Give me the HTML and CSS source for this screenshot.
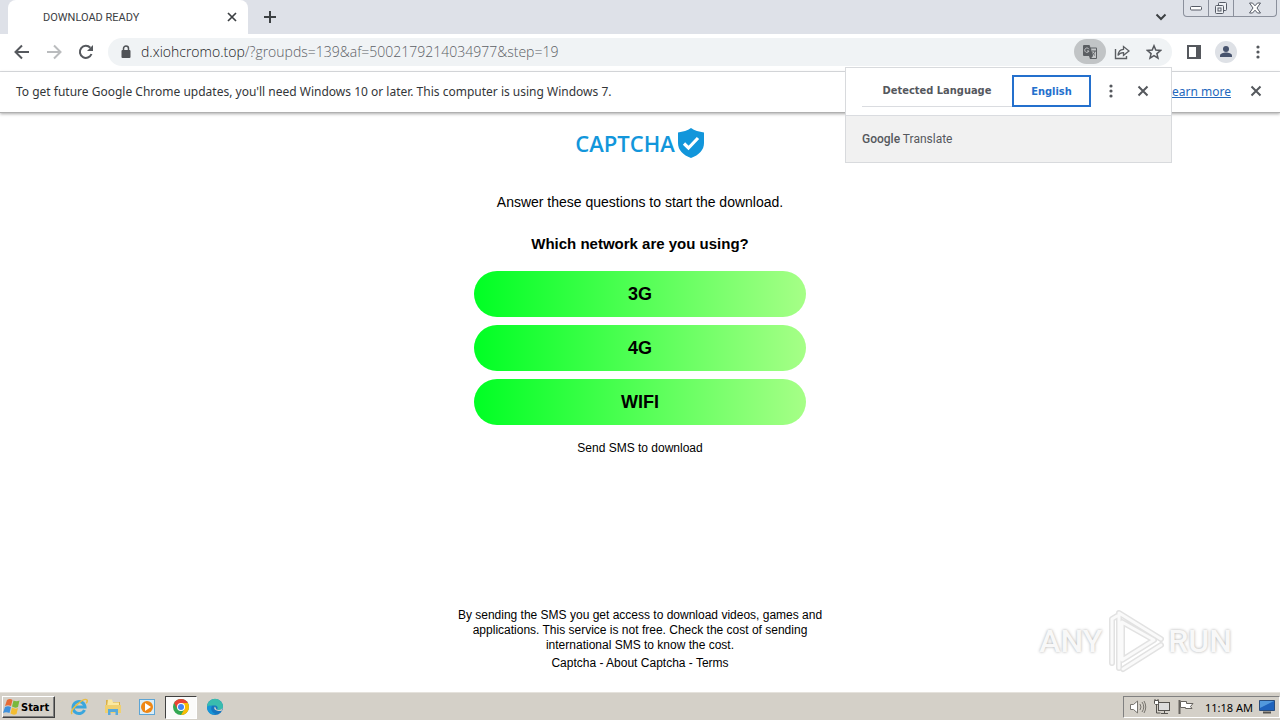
FILE: index.html
```html
<!DOCTYPE html>
<html lang="en">
<head>
<meta charset="utf-8">
<title>DOWNLOAD READY</title>
<link rel="stylesheet" href="styles.css">
</head>
<body>
<div class="desktop">
  <header class="tabstrip">
    <div class="tab"><span class="tab-title">DOWNLOAD READY</span>
      <button class="icon-btn" aria-label="Close tab"><svg width="10" height="10" viewBox="0 0 10 10"><path d="M1 1l8 8M9 1l-8 8" stroke="#3c4043" stroke-width="1.7"/></svg></button>
    </div>
    <button class="icon-btn new-tab" aria-label="New tab"><svg width="14" height="14" viewBox="0 0 14 14"><path d="M7 1v12M1 7h12" stroke="#3c4043" stroke-width="2"/></svg></button>
    <button class="icon-btn tab-search" aria-label="Search tabs"><svg width="12" height="8" viewBox="0 0 12 8"><path d="M1.500 1.500L6 6l4.500-4.500" fill="none" stroke="#3c4043" stroke-width="2"/></svg></button>
    <div class="win-controls">
      <button class="win-btn" aria-label="Minimize"><svg width="12" height="6" viewBox="0 0 12 6"><rect x=".5" y="1.500" width="11" height="3.500" rx="1" fill="#fff" stroke="#565b66"/></svg></button>
      <button class="win-btn" aria-label="Restore"><svg width="14" height="14" viewBox="0 0 14 14"><g fill="#eef0f4" stroke="#565b66"><rect x="4.500" y="1.500" width="8" height="8" rx="1"/><rect x="1.500" y="4.500" width="8" height="8" rx="1"/><rect x="4" y="7" width="3" height="3"/></g></svg></button>
      <button class="win-btn win-close" aria-label="Close"><svg width="14" height="12" viewBox="0 0 14 12"><path d="M1.500 1h3L7 3.800 9.500 1h3L9 6l3.500 5h-3L7 8.200 4.500 11h-3L5 6z" fill="#fff" stroke="#565b66"/></svg></button>
    </div>
  </header>

  <nav class="toolbar">
    <button class="icon-btn nav-btn" aria-label="Back"><svg width="16" height="16" viewBox="0 0 16 16"><path d="M15 8H2M8 1.500L1.500 8 8 14.500" fill="none" stroke="#55585d" stroke-width="2"/></svg></button>
    <button class="icon-btn nav-btn" aria-label="Forward"><svg width="16" height="16" viewBox="0 0 16 16"><path d="M1 8h13M8 1.500L14.500 8 8 14.500" fill="none" stroke="#babcbe" stroke-width="2"/></svg></button>
    <button class="icon-btn nav-btn" aria-label="Reload"><svg width="16" height="16" viewBox="0 0 16 16"><path d="M13.500 10A6 6 0 1 1 12.300 3.800" fill="none" stroke="#55585d" stroke-width="2"/><path d="M15 1v6H9z" fill="#55585d"/></svg></button>
    <div class="omnibox">
      <svg class="lock" width="10" height="14" viewBox="0 0 10 14"><path d="M2.500 6V3.500a2.500 2.500 0 0 1 5 0V6" fill="none" stroke="#505357" stroke-width="1.500"/><rect x=".5" y="5" width="9" height="8" rx="1" fill="#505357"/></svg>
      <span class="url"><b>d.xiohcromo.top</b>/?groupds=139&amp;af=5002179214034977&amp;step=19</span>
      <button class="icon-btn translate-btn" aria-label="Translate this page"><svg width="16" height="16" viewBox="0 0 16 16"><path d="M2 1h5.500l1 2.500H14a1 1 0 0 1 1 1V14a1 1 0 0 1-1 1H8l-1-3H2a1 1 0 0 1-1-1V2a1 1 0 0 1 1-1z" fill="#5b5e62"/><path d="M9 4.500h5v9.500H9.300L11 12z" fill="#c4c6c8"/><path d="M6.900 5.200A2.200 2.200 0 1 0 7 7H5" fill="none" stroke="#c4c6c8"/><path d="M10 7h4M13 7c-.5 2-1.500 3-2.800 4M10.500 8.500c.8 1.500 1.600 2.300 2.500 2.800" fill="none" stroke="#5b5e62"/></svg></button>
      <button class="icon-btn omni-btn" aria-label="Share"><svg width="16" height="16" viewBox="0 0 16 16"><path d="M1.500 5v9.500h11V12" fill="none" stroke="#5b5e62" stroke-width="1.400"/><path d="M4 11.500c.3-4 2-6 5.500-6.200V2.500L15 7l-5.500 4.300V8.600C7 8.500 5.300 9.500 4 11.500z" fill="none" stroke="#5b5e62" stroke-width="1.300"/></svg></button>
      <button class="icon-btn omni-btn" aria-label="Bookmark"><svg width="16" height="16" viewBox="0 0 16 16"><path d="M8 1.800l1.800 4.300 4.700.4-3.600 3.100 1.100 4.600L8 11.700l-4 2.500 1.100-4.600L1.500 6.500l4.700-.4z" fill="none" stroke="#55585d" stroke-width="1.500"/></svg></button>
    </div>
    <button class="icon-btn side-btn" aria-label="Side panel"><svg width="14" height="14" viewBox="0 0 14 14"><rect x="1" y="1" width="12" height="12" fill="#fff" stroke="#55585d" stroke-width="2"/><path d="M9 1h4v12H9z" fill="#55585d"/></svg></button>
    <button class="icon-btn side-btn" aria-label="Profile"><svg width="22" height="22" viewBox="0 0 22 22"><circle cx="11" cy="11" r="11" fill="#dee1e6"/><circle cx="11" cy="8" r="3" fill="#47536d"/><path d="M5 16v-1.500c0-2 3.500-3 6-3s6 1 6 3V16z" fill="#47536d"/></svg></button>
    <button class="icon-btn side-btn" aria-label="Menu"><svg width="4" height="14" viewBox="0 0 4 14" fill="#55585d"><circle cx="2" cy="2" r="1.600"/><circle cx="2" cy="7" r="1.600"/><circle cx="2" cy="12" r="1.600"/></svg></button>
  </nav>

  <div class="infobar">
    <span>To get future Google Chrome updates, you'll need Windows 10 or later. This computer is using Windows 7.</span>
    <a class="learn" href="#">Learn more</a>
    <button class="icon-btn" aria-label="Dismiss"><svg width="12" height="12" viewBox="0 0 12 12"><path d="M1.500 1.500l9 9M10.500 1.500l-9 9" stroke="#55585d" stroke-width="2"/></svg></button>
  </div>

  <section class="translate-popup" aria-label="Translate">
    <div class="popup-top">
      <div class="popup-tabs"><button class="lang">Detected Language</button><button class="lang lang-active">English</button></div>
      <button class="icon-btn" aria-label="Options"><svg width="4" height="14" viewBox="0 0 4 14" fill="#55585d"><circle cx="2" cy="2" r="1.600"/><circle cx="2" cy="7" r="1.600"/><circle cx="2" cy="12" r="1.600"/></svg></button>
      <button class="icon-btn popup-close" aria-label="Close"><svg width="12" height="12" viewBox="0 0 12 12"><path d="M1.500 1.500l9 9M10.500 1.500l-9 9" stroke="#55585d" stroke-width="2"/></svg></button>
    </div>
    <div class="popup-brand"><span class="google">Google</span> Translate</div>
  </section>

  <main class="page">
    <div class="brand">CAPTCHA<svg width="28" height="32" viewBox="0 0 28 32"><path d="M14 1c3.500 2.500 8 3.800 13 4.500V16c0 7-5 12-13 15C6 28 1 23 1 16V5.500C6 4.800 10.500 3.500 14 1z" fill="#1296db"/><path d="M7 16.500l4.500 4.500L21 11" fill="none" stroke="#fff" stroke-width="3.200"/></svg></div>
    <p class="intro">Answer these questions to start the download.</p>
    <h1 class="question">Which network are you using?</h1>
    <div class="options">
      <button class="option">3G</button>
      <button class="option">4G</button>
      <button class="option">WIFI</button>
    </div>
    <p class="send">Send SMS to download</p>
    <footer class="legal">
      <p>By sending the SMS you get access to download videos, games and applications. This service is not free. Check the cost of sending international SMS to know the cost.</p>
      <p class="links"><a href="#">Captcha</a> - <a href="#">About Captcha</a> - <a href="#">Terms</a></p>
    </footer>
    <div class="watermark"><span>ANY</span><svg width="60" height="66" viewBox="0 0 60 66"><g fill="none" stroke-linejoin="round" stroke-linecap="round"><path d="M7 55V11l5-3M14 60V5l42 26M18 61l38-24M17 14v38l32-20z" stroke="#e2e2e2" stroke-width="6"/><path d="M7 55V11l5-3M14 60V5l42 26M18 61l38-24M17 14v38l32-20z" stroke="#fafafa" stroke-width="3"/></g></svg><span>RUN</span></div>
  </main>

  <footer class="taskbar">
    <button class="start"><svg width="18" height="18" viewBox="0 0 18 18"><path d="M4 2q3-2 5.500 0L8 8Q5 6.500 2 8z" fill="#e66b35"/><path d="M10.500 2.500q3 1.500 6 0L15 9q-3 1.500-6-.5z" fill="#79b83c"/><path d="M2 9q3-1.500 6 0l-1.500 6Q3 13.500 0 15z" fill="#3f91dc"/><path d="M9 9.500q3 2 6 .5l-1.500 6q-3 1.500-6-.5z" fill="#f3bd31"/></svg>Start</button>
    <button class="task" aria-label="Internet Explorer"><svg width="18" height="18" viewBox="0 0 18 18"><path d="M14.500 12A6 6 0 1 1 15 9H4" fill="none" stroke="#3aa6dd" stroke-width="3"/><path d="M2 16C-1 12 14-1 17 2c.7 1-.2 2.500-.8 3.300" fill="none" stroke="#e8bd43" stroke-width="1.500"/></svg></button>
    <button class="task" aria-label="Explorer"><svg width="18" height="18" viewBox="0 0 18 18"><path d="M2 2h5l1 2h8v11H2z" fill="#d9b04a"/><path d="M4 1.500h4l1 3h6v4H3z" fill="#fae9a2"/><path d="M1 7h16v8H1z" fill="#efd070"/><path d="M4 17v-6h10v6h-2.500v-3h-5v3z" fill="#58aadb"/></svg></button>
    <button class="task" aria-label="Media Player"><svg width="18" height="18" viewBox="0 0 18 18"><rect x="1.500" y="1.500" width="15" height="15" fill="#d9edf8" stroke="#5da5d5"/><circle cx="9" cy="9" r="6" fill="#ef8714"/><path d="M7 5l6 4-6 4z" fill="#fff"/></svg></button>
    <button class="task task-active" aria-label="Chrome"><svg width="16" height="16" viewBox="0 0 16 16"><circle cx="8" cy="8" r="8" fill="#34a853"/><path d="M1.100 4A8 8 0 0 1 14.900 4H8L4.500 10z" fill="#ea4335"/><path d="M14.900 4A8 8 0 0 1 8 16l3.500-6L8 4z" fill="#fbbc04"/><circle cx="8" cy="8" r="4" fill="#fff"/><circle cx="8" cy="8" r="3" fill="#4285f4"/></svg></button>
    <button class="task" aria-label="Edge"><svg width="18" height="18" viewBox="0 0 18 18"><circle cx="9" cy="9" r="8" fill="#1675bf"/><path d="M1 9a8 8 0 0 1 16-.5c0 3-3 4-6 3 1.500-2 0-4-2.500-4S3 8 1 9z" fill="#39bcae"/><path d="M6 8c-2 3 0 7 4 8-5 2-9-2-9-7 1-1.500 3-2 5-1z" fill="#1795d7"/><path d="M9 8.500c-2 2 0 5 6.500 4.500l1.500-4c-1 3-4 3.500-6.500 2.500z" fill="#d4d0c8"/></svg></button>
    <div class="tray">
      <svg width="18" height="16" viewBox="0 0 18 16"><path d="M1.500 5.500h3L8.500 2v12l-4-3.500h-3z" fill="#fff" stroke="#77746e"/><path d="M11 5q2 3 0 6M13 3q3.500 5 0 10M15 2q3.500 6 0 12" fill="none" stroke="#77746e"/></svg>
      <svg width="18" height="16" viewBox="0 0 18 16"><rect x="5.500" y="3.500" width="11" height="8" fill="#ddd" stroke="#55534f"/><path d="M8 14.500h7M11.500 12v2M3.500 6v8h4M2 0v2M5 0v2" fill="none" stroke="#55534f"/><path d="M1.500 1.500h4v3l-1 1h-2l-1-1z" fill="#fff" stroke="#55534f"/></svg>
      <svg width="18" height="16" viewBox="0 0 18 16"><path d="M2.500 1v14" stroke="#66635e" stroke-width="2"/><path d="M3.500 2.500h6v2H16l-2.500 3L15 9.500H8.500v-1h-5z" fill="#fff" stroke="#66635e"/></svg>
      <time>11:18 AM</time>
      <svg width="16" height="14" viewBox="0 0 16 14"><path d="M.5.500h15v10H.5z" fill="#1f63bd" stroke="#294d7d"/><path d="M1 1h14L1 8z" fill="#5299dd"/><path d="M4 12.500h8" stroke="#55534f" stroke-width="2"/></svg>
    </div>
  </footer>
</div>
</body>
</html>
```
FILE: styles.css
```css
* { box-sizing: border-box; }
body { margin: 0; background: #fff; color: #000; font-family: "Liberation Sans", Arial, sans-serif; }
p, h1 { margin: 0; }
button { padding: 0; border: 0; background: none; color: inherit; font: inherit; }
svg { display: block; flex: none; }
.desktop { position: relative; display: flex; flex-direction: column; min-height: 100vh; }
.icon-btn { display: flex; align-items: center; justify-content: center; flex: none; }

.tabstrip { display: flex; align-items: center; height: 34px; padding-left: 8px; background: #dee1e8; }
.tab { display: flex; align-items: center; justify-content: space-between; width: 240px; height: 34px; padding: 0 11px 0 35px; border-radius: 8px 8px 0 0; background: #fff; }
.tab-title { color: #3c4043; font: 11px Roboto, sans-serif; }
.new-tab { margin-left: 15px; }
.tab-search { margin: 0 16px 0 auto; }
.win-controls { display: flex; align-self: flex-start; height: 17px; margin-right: 3px; border: 1px solid #8b909c; border-top: 0; border-radius: 0 0 4px 4px; }
.win-btn { display: flex; align-items: center; justify-content: center; width: 25px; border-right: 1px solid #8b909c; }
.win-close { width: 42px; border-right: 0; }

.toolbar { display: flex; align-items: center; height: 38px; padding: 0 20px 2px 14px; border-bottom: 1px solid #dadce0; background: #fff; }
.nav-btn { width: 16px; margin-right: 16px; }
.omnibox { display: flex; flex: 1; align-items: center; height: 28px; margin: 0 15px 0 -2px; padding: 0 10px 0 13px; border-radius: 14px; background: #f0f3f5; }
.url { flex: 1; margin-left: 10px; color: #5c6065; font: 300 14px "Open Sans", "Noto Sans", sans-serif; }
.url b { color: #202124; font-weight: inherit; }
.translate-btn { width: 32px; height: 25px; border-radius: 13px; background: #c1c4c6; }
.omni-btn { width: 16px; margin-left: 8px; }
.omni-btn + .omni-btn { margin-left: 16px; }
.side-btn + .side-btn { margin-left: 14px; }
.side-btn:last-child { margin-left: 19px; }

.infobar { display: flex; align-items: center; height: 41px; padding: 0 18px 2px 16px; border-bottom: 1px solid #b0b0b0; box-shadow: 0 1px 3px #aaa; color: #333639; font: 12px "Noto Sans", sans-serif; }
.learn { margin: 0 19px 0 auto; color: #2468bd; }

.translate-popup { position: absolute; top: 67px; right: 108px; width: 327px; border: 1px solid #d8dadd; background: #fff; color: #55585d; }
.popup-top { display: flex; align-items: center; height: 47px; padding: 0 22px 1px 16px; }
.popup-tabs { display: flex; margin-right: 18px; }
.lang { width: 150px; height: 32px; border-bottom: 1px solid #dadce0; font: bold 11px "DejaVu Sans Condensed", "DejaVu Sans", sans-serif; }
.lang-active { width: 79px; border: 2px solid #2470cd; color: #2470cd; }
.popup-close { margin-left: auto; }
.popup-brand { height: 47px; padding: 16px; border-top: 1px solid #dadce0; background: #f1f1f1; font: 12px/14px Roboto, sans-serif; }
.google { font-weight: 500; }

.page { position: relative; display: flex; flex: 1; flex-direction: column; align-items: center; padding: 14px 16px 21px; text-align: center; }
.brand { display: flex; align-items: center; gap: 2px; color: #1296db; font: 600 22px/32px "Open Sans", sans-serif; }
.intro { margin-top: 34px; font-size: 14px; line-height: 18px; }
.question { margin-top: 24px; font-size: 15px; line-height: 18px; }
.options { display: flex; flex-direction: column; gap: 8px; width: 100%; max-width: 332px; margin-top: 18px; }
.option { height: 46px; border-radius: 23px; background: linear-gradient(90deg, #00ff24, #a6ff87); font-size: 18px; font-weight: 700; }
.send { margin: 15px 0 24px; font-size: 12px; line-height: 16px; }
.legal { max-width: 380px; margin-top: auto; font-size: 12px; line-height: 15px; }
.links { margin-top: 3px; }
.links a { color: inherit; text-decoration: none; }
.watermark { position: absolute; right: 48px; bottom: 18px; display: flex; align-items: center; gap: 3px; color: #f8f8f8; font: 500 32px/66px Roboto, sans-serif; text-shadow: 0 0 3px #aaa; }

.taskbar { display: flex; align-items: center; height: 28px; padding: 1px 0 0 2px; border-top: 1px solid #e5e2dc; background: #d4d0c8; }
.start { display: flex; align-items: center; width: 53px; height: 22px; border: 1px solid; border-color: #fff #404040 #404040 #fff; box-shadow: inset -1px -1px #808080; font: bold 11px "DejaVu Sans Condensed", sans-serif; }
.task { display: flex; align-items: center; justify-content: center; width: 32px; height: 23px; margin-left: 2px; }
.start + .task { margin-left: 8px; }
.task-active { border: 1px solid; border-color: #404040 #fff #fff #404040; background: #fbfbfa; }
.tray { display: flex; align-items: center; gap: 6px; height: 22px; margin-left: auto; padding: 0 4px 0 5px; border: 1px solid; border-color: #808080 #fff #fff #808080; font: 11px "Noto Sans", sans-serif; }
.tray time { margin-left: 4px; }
```
